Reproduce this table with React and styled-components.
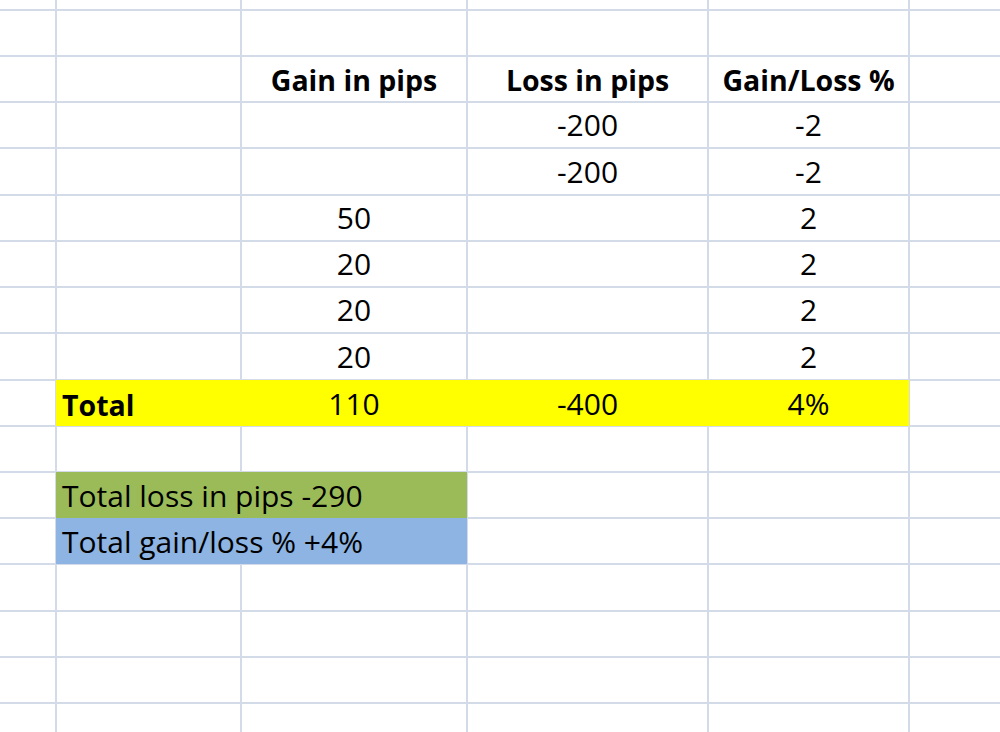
import React from "react";
import styled, { createGlobalStyle } from "styled-components";

const Global = createGlobalStyle`
  html, body { margin: 0; padding: 0; background: #fff; }
  body { width: 1000px; height: 732px; overflow: hidden; }
`;

const LINE = "#d4dbe8";

const Sheet = styled.div`
  display: grid;
  width: 1000px;
  height: 732px;
  grid-template-columns: 55px 183px 224px 239px 199px 1fr;
  grid-template-rows: 9px 44px 44px 44px 45px 44px 44px 44px 45px 44px 44px 44px 44px 45px 44px 44px 1fr;
  gap: 2px;
  background: ${LINE};
  overflow: hidden;
  font-family: "Open Sans", "Liberation Sans", sans-serif;
  font-size: 30px;
  color: #000;
`;

const Cell = styled.div`
  background: ${(p) => p.$fill || "#fff"};
  grid-column: ${(p) => (p.$span ? `span ${p.$span}` : "auto")};
  display: flex;
  align-items: flex-end;
  justify-content: ${(p) => (p.$align === "left" ? "flex-start" : "center")};
  padding: 0 0 7px ${(p) => (p.$align === "left" ? "6px" : "0")};
  font-weight: ${(p) => (p.$bold ? 700 : 400)};
  font-size: ${(p) => (p.$bold ? "28.5px" : "inherit")};
  line-height: 1;
  white-space: nowrap;
  ${(p) => (p.$fill ? "margin: -1px; z-index: 1;" : "")}
`;

const YELLOW = "#ffff00";
const GREEN = "#9bbb59";
const BLUE = "#8db4e2";

const blank = [{}, {}, {}, {}, {}];

// each row lists columns B..F; column A is always blank
const rows = [
  blank,
  blank,
  [{}, { t: "Gain in pips", b: true }, { t: "Loss in pips", b: true }, { t: "Gain/Loss %", b: true }, {}],
  [{}, {}, { t: "-200" }, { t: "-2" }, {}],
  [{}, {}, { t: "-200" }, { t: "-2" }, {}],
  [{}, { t: "50" }, {}, { t: "2" }, {}],
  [{}, { t: "20" }, {}, { t: "2" }, {}],
  [{}, { t: "20" }, {}, { t: "2" }, {}],
  [{}, { t: "20" }, {}, { t: "2" }, {}],
  "total",
  blank,
  "green",
  "blue",
  blank,
  blank,
  blank,
  blank,
];

const renderRow = (row, i) => {
  if (row === "total") {
    return (
      <React.Fragment key={i}>
        <Cell />
        <Cell $fill={YELLOW} $align="left" $bold>Total</Cell>
        <Cell $fill={YELLOW}>110</Cell>
        <Cell $fill={YELLOW}>-400</Cell>
        <Cell $fill={YELLOW}>4%</Cell>
        <Cell />
      </React.Fragment>
    );
  }
  if (row === "green" || row === "blue") {
    return (
      <React.Fragment key={i}>
        <Cell />
        <Cell $fill={row === "green" ? GREEN : BLUE} $span={2} $align="left">
          {row === "green" ? "Total loss in pips -290" : "Total gain/loss % +4%"}
        </Cell>
        <Cell />
        <Cell />
        <Cell />
      </React.Fragment>
    );
  }
  return (
    <React.Fragment key={i}>
      <Cell />
      {row.map((c, j) => (
        <Cell key={j} $bold={c.b}>{c.t}</Cell>
      ))}
    </React.Fragment>
  );
};

export default function App() {
  return (
    <>
      <Global />
      <Sheet>{rows.map(renderRow)}</Sheet>
    </>
  );
}
